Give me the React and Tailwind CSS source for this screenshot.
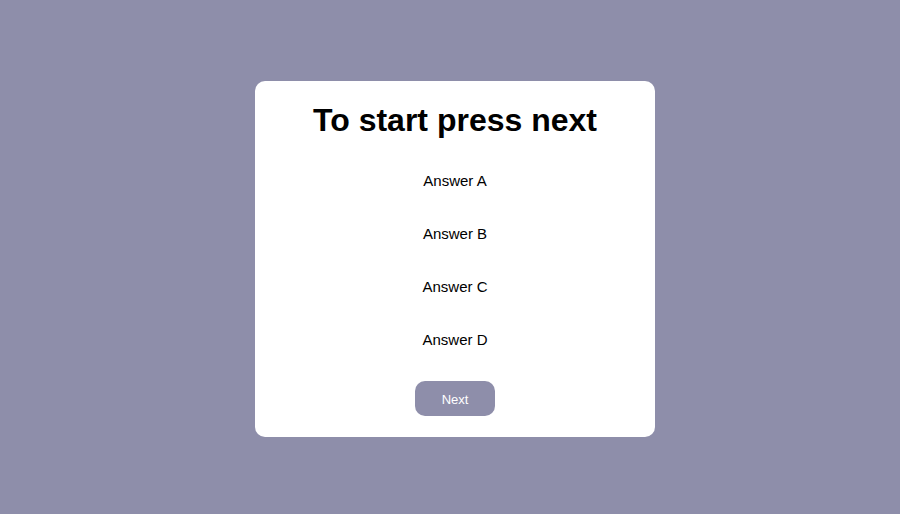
import React from 'react';

const answers = ['Answer A', 'Answer B', 'Answer C', 'Answer D'];

export default function App() {
  return (
    <div className="w-[900px] h-[514px] bg-[#8e8eaa] flex items-start justify-center pt-[81px] pl-[10px] font-['Liberation_Sans',Arial,sans-serif]">
      <div className="w-[400px] h-[356px] bg-white rounded-[10px] flex flex-col items-center pt-[20px]">
        <h1 className="h-[38px] leading-[38px] text-[32px] font-bold text-black">To start press next</h1>

        {/* Answer options */}
        <div className="mt-[16px] flex flex-col items-center">
          {answers.map((a) => (
            <div key={a} className="h-[53px] flex items-center text-[15px] text-black">
              {a}
            </div>
          ))}
        </div>

        <button className="mt-[14px] w-[80px] h-[35px] rounded-[10px] bg-[#8e8eaa] text-white text-[13px] pt-[2px]">
          Next
        </button>
      </div>
    </div>
  );
}
